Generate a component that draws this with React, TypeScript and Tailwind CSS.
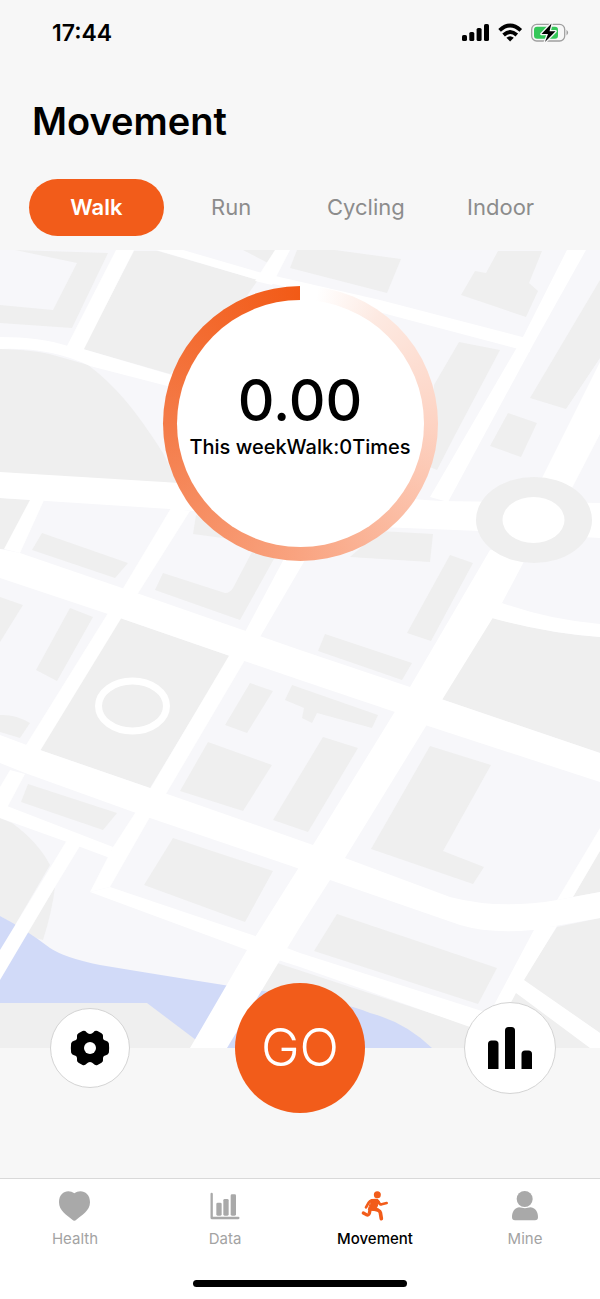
import React, { useState } from "react";

const BUILDINGS = [
  "M15 250 108 253 72 328 0 323V305L53 310 77 263Z",
  "M134 251H158L258 280 244 300 170 374 83 349Z",
  "M0 349Q35 350 53 355T88 365Q108 380 125 400T163 453L178 484 0 473Z",
  "M243 250H280L268 263Z",
  "M297 250H335L401 259 387 293 290 268Z",
  "M498 251H542L529 283 538 291 526 317 461 295 475 271 486 273Z",
  "M459 342 500 350 455 435 437 470 425 465 434 385Z",
  "M600 280 530 398 566 409 600 358Z",
  "M508 413 537 423 521 457 490 446Z",
  "M0 498 31 500 5 549H0Z",
  "M42 533 128 563 115 578 32 550Z",
  "M163 573 225 593Q230 593 233 588L253 550 275 557 240 620 155 590Z",
  "M196 515 193 534 245 541Z",
  "M0 597 23 605 0 642Z",
  "M70 608 93 617 57 681 36 670Z",
  "M0 715Q15 714 30 723L20 738 0 732Z",
  "M120 618 230 656 150 788 40 750Z",
  "M250 683 273 691 247 733 225 725Z",
  "M292 685 378 715 372 728 317 713 312 723 302 718 304 708 285 700Z",
  "M323 737 358 748 308 832 273 820Z",
  "M208 742 272 765 243 811 180 791Z",
  "M430 746 491 765 443 851 484 867 473 884 371 849Z",
  "M28 784 117 813 103 830 21 802Z",
  "M173 838 273 871 245 922 144 885Z",
  "M337 914 497 968 478 1004 314 951Z",
  "M380 531 433 534 430 562 350 557Z",
  "M450 555 473 563 431 641 407 633Z",
  "M325 634 412 663 402 680 318 651Z",
  "M490 617Q545 633 600 637V753L441 699Z",
  "M0 818 12 823Q38 842 50 865L15 925 0 916Z",
  "M55 887Q52 912 43 940L25 935Z",
  "M600 850 573 897 600 892Z",
  "M600 918 557 927 523 980 600 1033Z",
  "M277 963 467 1025 517 988 592 1048H220Z",
  "M0 1003H148L198 1041 194 1048H0Z",
];

const WATER = [
  "M0 916Q25 929 50 948 65 958 100 965 160 975 230 986L196 1040 147 1003H0Z",
  "M255 990Q340 1000 370 1013 405 1022 432 1048H225Z",
];

const ROADS = [
  "M0 337Q40 337 68 346L83 349 175 376V388L90 366Q50 347 0 349Z",
  "M116 250H134L83 351 67 346Z",
  "M156 250H183L262 273 380 300 526 338 530 352 390 315 310 293 258 280Z",
  "M275 250H290L272 285 255 281Z",
  "M567 250H586L534 343 448 502 430 497 523 337Z",
  "M600 362 541 480 570 492 600 434Z",
  "M0 472 180 483 440 501 600 503V538L480 531 380 527 170 509 0 498Z",
  "M31 498H45L20 553 4 549Z",
  "M0 549 20 553 125 589 240 629 300 650 410 687 441 699 600 753V782L425 725 395 712 300 680 230 656 120 618 0 578Z",
  "M171 508 190 511 137 595 122 590Z",
  "M286 555 305 560 260 637 245 632Z",
  "M108 613 122 617 40 751 26 745Z",
  "M230 654 245 660 166 794 150 789Z",
  "M0 735 40 750 150 788 313 845 345 858 450 897Q500 910 557 900L600 892V918L533 930Q490 934 460 925L330 880 297 868 150 818 25 773 0 763Z",
  "M10 770 25 774 7 808 0 814V787Z",
  "M7 806 113 847 110 858 67 842 0 818V803Z",
  "M137 810 150 817 110 887 90 892 113 847Z",
  "M90 892 110 887 258 937 300 953 485 1012 470 1027 300 967 247 950Z",
  "M67 840 80 846 55 887 0 980V950Z",
  "M490 550 530 550 502 603 442 700 345 858 330 880 300 927 227 1048H190L247 950 313 845 410 687Z",
  "M502 603Q550 620 600 624V637Q545 633 488 617Z",
  "M600 828 557 900 573 897 600 851Z",
  "M535 928 557 926 524 980 600 1033V1048H590L516 993 508 1008 494 1005Z",
];

function CityMap() {
  return (
    <svg
      className="absolute inset-x-0 top-0 bottom-[130px] h-[calc(100%-130px)] w-full"
      viewBox="0 250 600 798"
      preserveAspectRatio="xMidYMid slice"
      aria-hidden="true"
    >
      <rect y="250" width="600" height="798" fill="#f7f7fa" />
      {BUILDINGS.map((d) => (
        <path key={d} d={d} fill="#efefef" />
      ))}
      {WATER.map((d) => (
        <path key={d} d={d} fill="#d1daf8" />
      ))}
      {ROADS.map((d) => (
        <path key={d} d={d} fill="#ffffff" />
      ))}
      <ellipse cx="534" cy="520" rx="58" ry="43" fill="#efefef" />
      <ellipse cx="533.5" cy="520" rx="31" ry="23" fill="#ffffff" />
      <ellipse cx="132.5" cy="706" rx="34" ry="25" fill="none" stroke="#ffffff" strokeWidth="7" />
    </svg>
  );
}

function StatusBar() {
  return (
    <div className="flex h-[66px] items-center justify-between pr-[30px] pl-[52px]">
      <time className="text-[23px] leading-7 font-semibold">17:44</time>
      <svg width="109" height="20" viewBox="0 0 109 20" aria-hidden="true">
        <rect x="1" y="12" width="5" height="6" rx="1.6" />
        <rect x="8.3" y="9" width="5" height="9" rx="1.6" />
        <rect x="15.6" y="5" width="5" height="13" rx="1.6" />
        <rect x="23" y="1" width="5" height="17" rx="1.6" />
        <g fill="none" stroke="#000" strokeWidth="3.8">
          <path d="M38.6 7.4Q49-2.2 59.8 7.4" />
          <path d="M42.6 12Q49.1 6 55.8 12" />
        </g>
        <path d="M45.4 14.8Q49.1 11.8 52.8 14.8L49.1 18.4Z" />
        <rect x="70.7" y="1.4" width="33" height="16.6" rx="5" fill="none" stroke="#a0a0a0" strokeWidth="1.3" />
        <path d="M105.5 6.8Q108.8 9.6 105.5 12.4Z" fill="#a0a0a0" />
        <rect x="73" y="3.7" width="24" height="12" rx="3" fill="#35c759" />
        <path
          d="M90.5 .5 80.5 11H87L84 19 94.5 8.3H88.5Z"
          stroke="#f7f7f7"
          strokeWidth="2.6"
          paintOrder="stroke"
          strokeLinejoin="round"
        />
      </svg>
    </div>
  );
}

const GEAR_HALF =
  "M0-14Q2-14 3.5-15.8 5-17.8 7.5-17L11.5-14.8Q13.5-13.6 13-11.5 12.5-7.8 16-7.2 18.4-6.8 18.9-4.5 19.4 0 18.9 4.5 18.4 6.8 16 7.2 12.5 7.8 13 11.5 13.5 13.6 11.5 14.8L7.5 17Q5 17.8 3.5 15.8 2 14 0 14H-1V-14Z";

function GearIcon() {
  return (
    <svg width="40" height="40" viewBox="-20 -20 40 40" aria-hidden="true">
      <path d={GEAR_HALF} />
      <path d={GEAR_HALF} transform="scale(-1 1)" />
      <circle r="6" fill="#fff" />
    </svg>
  );
}

function StatsIcon() {
  return (
    <svg width="44" height="42" viewBox="0 0 44 42" aria-hidden="true">
      <path d="M0 42V17Q0 13.5 3.5 13.5H7Q10.5 13.5 10.5 17V42Z" />
      <path d="M17 42V3.5Q17 0 20.5 0H23.5Q27 0 27 3.5V42Z" />
      <path d="M33.5 42V27Q33.5 23.5 37 23.5H40.5Q44 23.5 44 27V42Z" />
    </svg>
  );
}

function HeartIcon() {
  return (
    <svg width="32" height="32" viewBox="177 60 96 96" fill="#a9a9a9" aria-hidden="true">
      <path d="M223 70C207 57 177 63 177 97 177 122 201 137 217 149Q223 155 229 149C245 137 270 122 270 97 270 63 239 57 223 70Z" />
    </svg>
  );
}

function DataIcon() {
  return (
    <svg width="32" height="32" viewBox="628 60 96 96" fill="#a9a9a9" aria-hidden="true">
      <path d="M636 72V144H716" fill="none" stroke="#a9a9a9" strokeWidth="7" strokeLinecap="round" strokeLinejoin="round" />
      <rect x="650" y="98" width="16" height="39" rx="4" />
      <rect x="671" y="87" width="16" height="50" rx="4" />
      <rect x="693" y="73" width="16" height="64" rx="4" />
    </svg>
  );
}

function RunnerIcon() {
  return (
    <svg width="32" height="32" viewBox="177 60 96 96" fill="none" stroke="#f25c1a" strokeLinecap="round" strokeLinejoin="round" aria-hidden="true">
      <circle cx="232" cy="74" r="10.5" fill="#f25c1a" stroke="none" />
      <path d="M198 112 206 98Q209 93 215 91L231 90" strokeWidth="8" />
      <path d="M233 93 240 102Q242 104 245 103L260 99" strokeWidth="8" />
      <path d="M214 90Q230 85 238 93L229 115 226 122 206 120Z" fill="#f25c1a" strokeWidth="3" />
      <path d="M216 115 235 121Q240 123 241 128L244 146" strokeWidth="11" />
      <path d="M211 115 208 130Q206 137 199 134L190 129" strokeWidth="10" />
    </svg>
  );
}

function PersonIcon() {
  return (
    <svg width="32" height="32" viewBox="627 60 96 96" fill="#a9a9a9" aria-hidden="true">
      <circle cx="674" cy="87" r="24" />
      <path d="M657 112Q675 117 692 112C708 114 714 128 714 142Q714 151 705 151H645Q636 151 636 142C636 128 642 114 657 112Z" />
    </svg>
  );
}

const ACTIVITIES = ["Walk", "Run", "Cycling", "Indoor"];

const NAV_ITEMS = [
  { label: "Health", Icon: HeartIcon },
  { label: "Data", Icon: DataIcon },
  { label: "Movement", Icon: RunnerIcon },
  { label: "Mine", Icon: PersonIcon },
];

export default function App() {
  const [activity, setActivity] = useState("Walk");

  return (
    <div className="flex min-h-screen flex-col bg-[#f7f7f7] font-['Inter','Liberation_Sans',sans-serif] text-black">
      <StatusBar />

      <header className="px-8 pt-[31px]">
        <h1 className="text-[38px] leading-12 font-semibold">Movement</h1>
      </header>

      <div role="tablist" aria-label="Activity" className="mt-[34px] mb-[14px] grid grid-cols-4 pr-8 pl-[29px]">
        {ACTIVITIES.map((name) => (
          <button
            key={name}
            type="button"
            role="tab"
            aria-selected={activity === name}
            onClick={() => setActivity(name)}
            className={
              activity === name
                ? "h-[57px] rounded-full bg-[#f25c1a] text-[22px] font-semibold text-white"
                : "h-[57px] rounded-full text-[22px] text-[#8c8c8c]"
            }
          >
            {name}
          </button>
        ))}
      </div>

      <main className="relative flex flex-1 flex-col items-center justify-between pt-9 pb-[65px]">
        <CityMap />

        <div className="relative size-[275px] rounded-full bg-[conic-gradient(#ffffff_0%,#ffffff_2%,#fde9e1_10%,#fdd3c3_25%,#f9a481_50%,#f47b48_75%,#f25a16_100%)] p-[14px]">
          <div className="flex size-full flex-col items-center rounded-full bg-white pt-[69px]">
            <p className="text-[57px] leading-16 font-medium">0.00</p>
            <p className="text-xl leading-7 font-medium whitespace-nowrap">This week{activity}:0Times</p>
          </div>
        </div>

        <div className="relative grid w-full grid-cols-3 items-center">
          <div className="flex justify-start pl-[50px]">
            <button
              type="button"
              aria-label="Settings"
              className="flex size-20 items-center justify-center rounded-full border border-[#d4d4d4] bg-white"
            >
              <GearIcon />
            </button>
          </div>
          <div className="flex justify-center">
            <button
              type="button"
              className="size-[130px] rounded-full bg-[#f25c1a] text-[52px] font-light text-white"
            >
              GO
            </button>
          </div>
          <div className="flex justify-end pr-11">
            <button
              type="button"
              aria-label="Statistics"
              className="flex size-[92px] items-center justify-center rounded-full border border-[#d4d4d4] bg-white"
            >
              <StatsIcon />
            </button>
          </div>
        </div>
      </main>

      <footer className="border-t border-[#d9d9d9] bg-white">
        <nav aria-label="Main" className="grid grid-cols-4 pt-[11px]">
          {NAV_ITEMS.map(({ label, Icon }) => (
            <a
              key={label}
              href={"#" + label.toLowerCase()}
              aria-current={label === "Movement" ? "page" : undefined}
              className={
                label === "Movement"
                  ? "flex flex-col items-center gap-[7px] text-[15px] leading-5 font-medium text-black"
                  : "flex flex-col items-center gap-[7px] text-[15px] leading-5 text-[#a3a3a3]"
              }
            >
              <Icon />
              {label}
            </a>
          ))}
        </nav>
        <div className="flex justify-center pt-[31px] pb-3">
          <div className="h-[7px] w-[214px] rounded-full bg-black" />
        </div>
      </footer>
    </div>
  );
}
